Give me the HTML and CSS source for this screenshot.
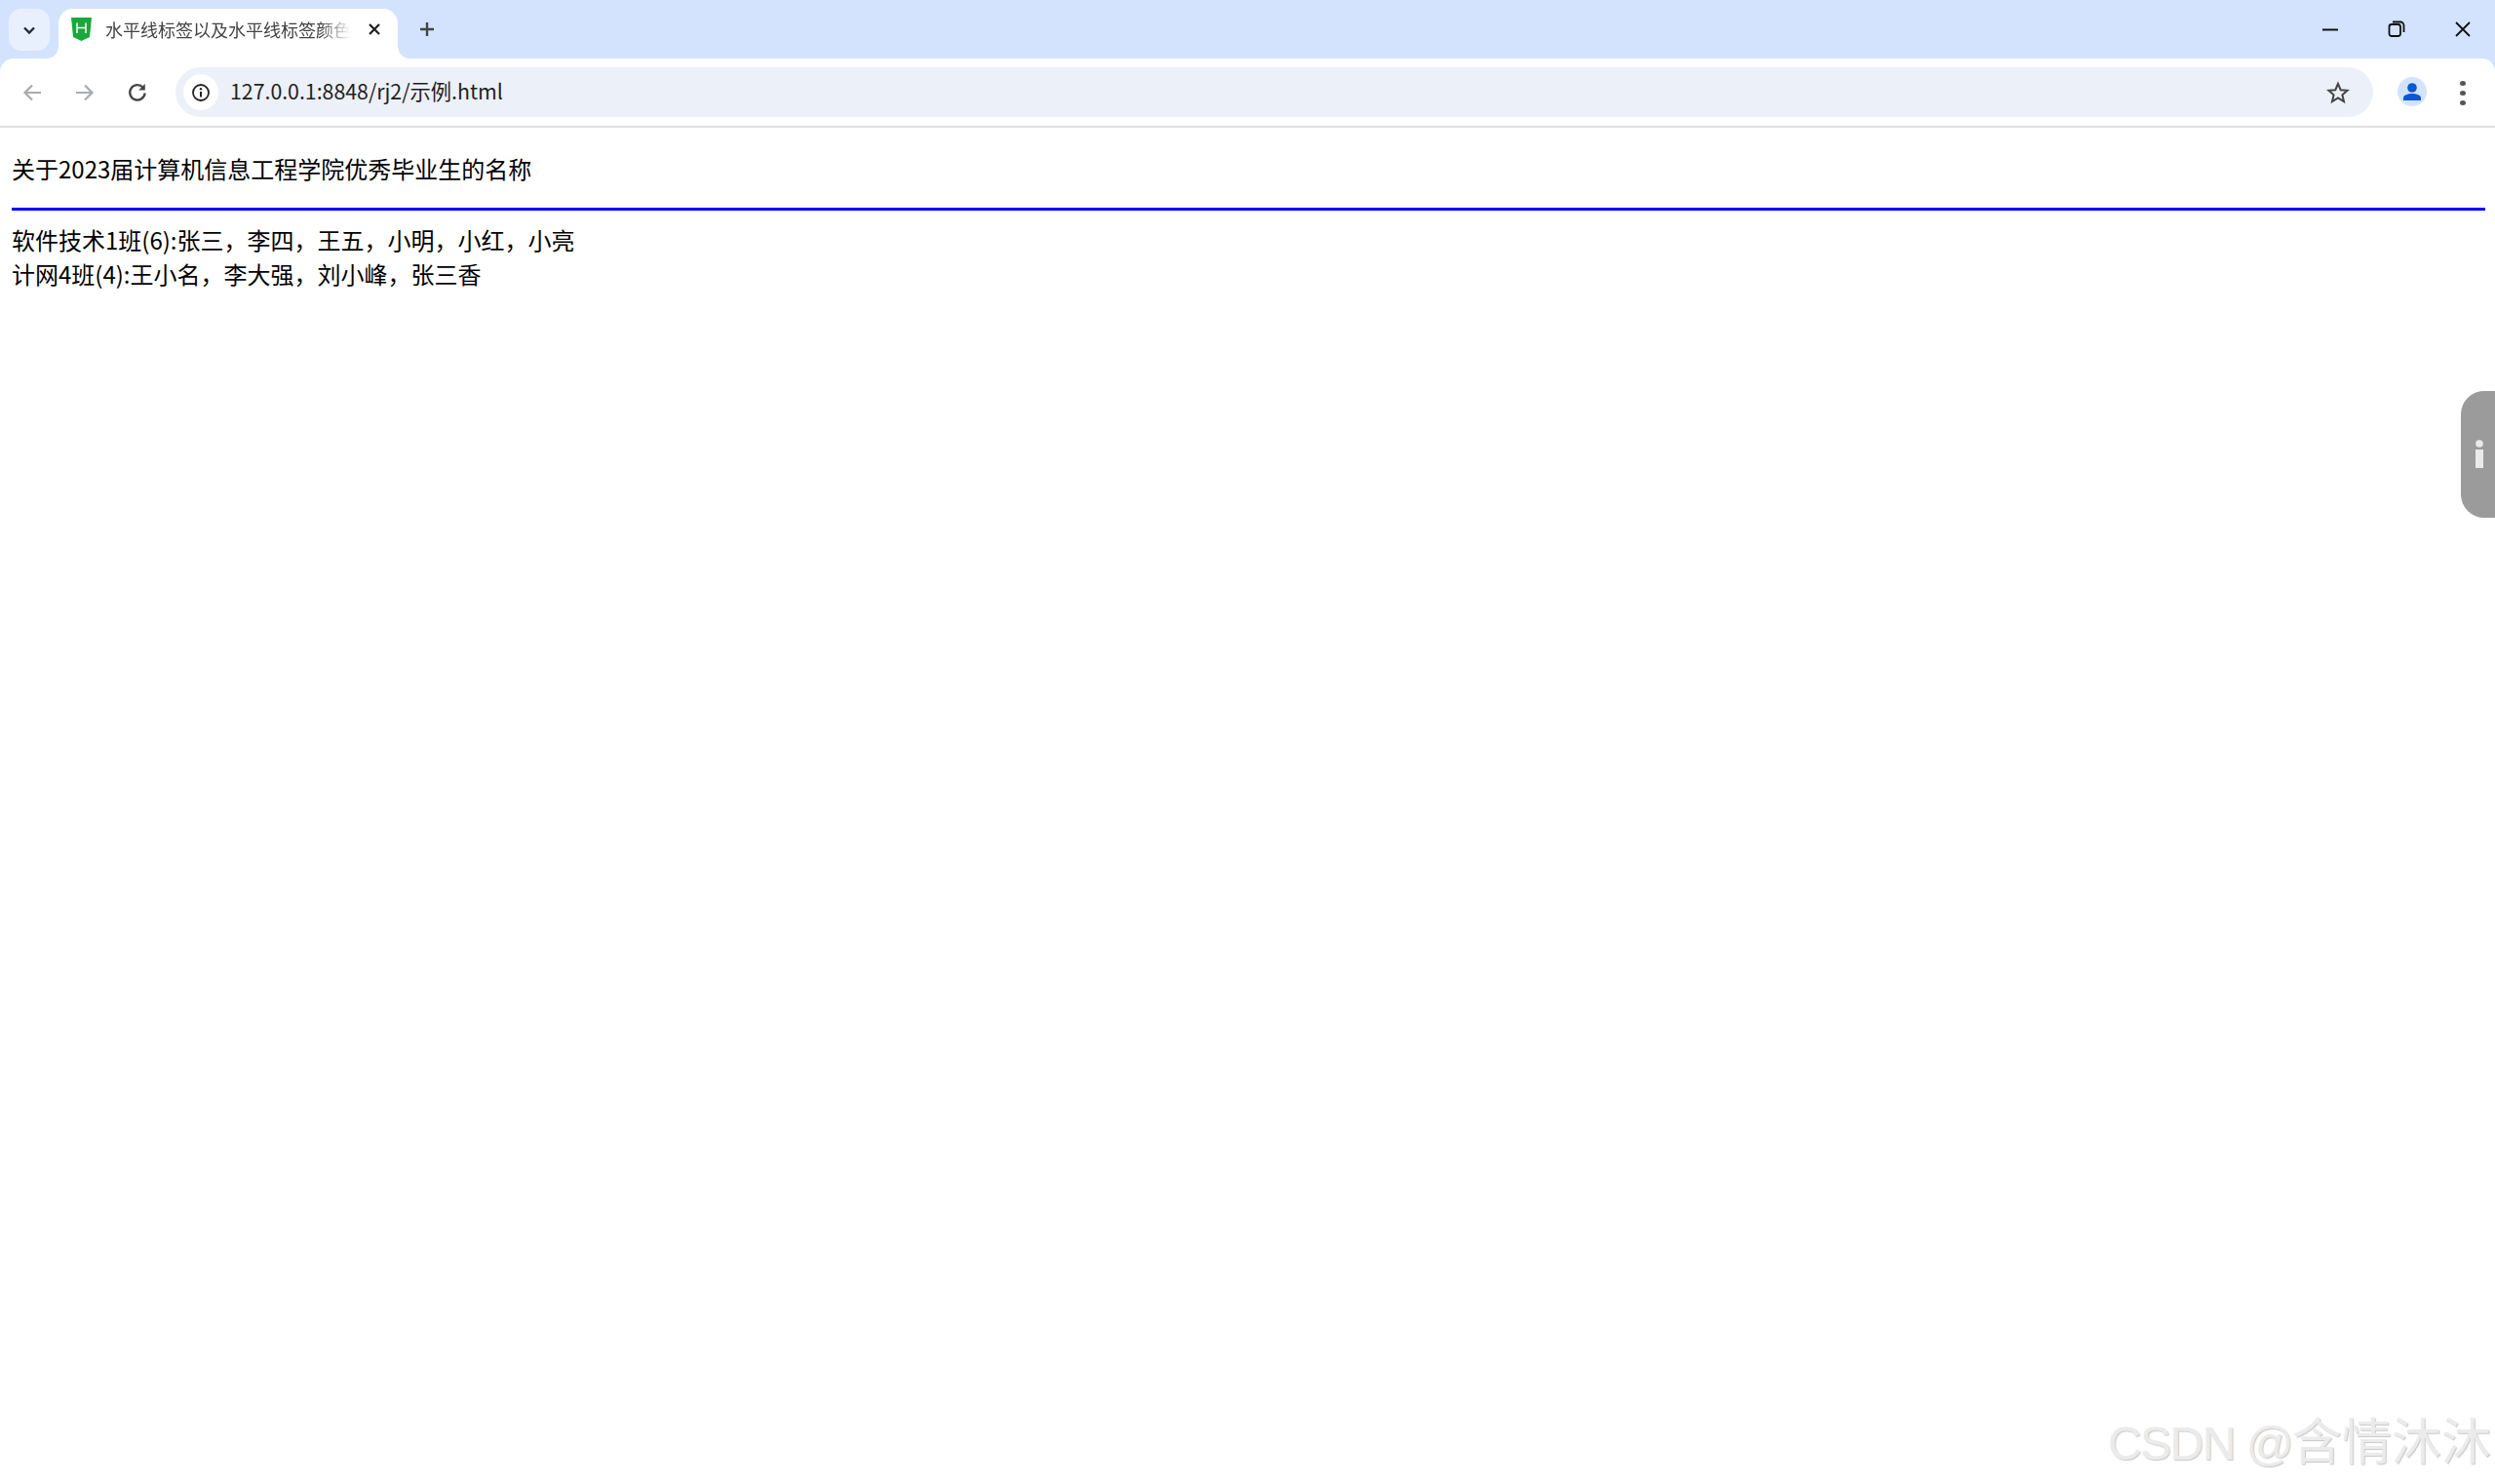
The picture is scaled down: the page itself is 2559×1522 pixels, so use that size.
FILE: index.html
```html
<!DOCTYPE html>
<html lang="zh-CN">
<head>
<meta charset="utf-8">
<title>水平线标签以及水平线标签颜色</title>
<link rel="stylesheet" href="styles.css">
</head>
<body>
<header class="chrome">
  <div class="tabstrip">
    <button class="tabsearch" aria-label="tabs">
      <svg width="16" height="16" viewBox="0 0 16 16"><path d="M3 5.5 8 10.5 13 5.5" fill="none" stroke="#1f2a3a" stroke-width="2.4"/></svg>
    </button>
    <div class="tab">
      <svg class="favicon" width="21" height="24" viewBox="0 0 21 24"><path d="M0 0H21L19 20 10.500 24 2 20Z" fill="#1aa83c"/><path d="M6 5.500V16M15 5.500V16M6 10.500H15" stroke="#fff" stroke-width="1.500" fill="none"/></svg>
      <span class="tabtitle">水平线标签以及水平线标签颜色</span>
      <svg class="tabclose" width="14" height="14" viewBox="0 0 14 14"><path d="M2 2 12 12M12 2 2 12" stroke="#1f1f1f" stroke-width="2.200"/></svg>
    </div>
    <svg class="newtab" width="20" height="20" viewBox="0 0 20 20"><path d="M10 3V17M3 10H17" stroke="#444" stroke-width="2.400"/></svg>
    <div class="winctl">
      <svg width="18" height="18" viewBox="0 0 18 18"><path d="M1 9.500H17" stroke="#111" stroke-width="2"/></svg>
      <svg width="18" height="18" viewBox="0 0 18 18"><rect x="1.500" y="4" width="11.500" height="12" rx="2.500" fill="none" stroke="#111" stroke-width="1.800"/><path d="M5 1.500H13A3.500 3.500 0 0 1 16.500 5V12" fill="none" stroke="#111" stroke-width="1.800"/></svg>
      <svg width="18" height="18" viewBox="0 0 18 18"><path d="M2 2 16 16M16 2 2 16" stroke="#111" stroke-width="1.800"/></svg>
    </div>
  </div>
  <div class="toolbar">
    <div class="navs">
      <svg width="22" height="22" viewBox="0 0 22 22"><path d="M20 11H3.500M11 3.500 3.500 11 11 18.500" fill="none" stroke="#a9abae" stroke-width="2.200"/></svg>
      <svg width="22" height="22" viewBox="0 0 22 22"><path d="M2 11H18.500M11 3.500 18.500 11 11 18.500" fill="none" stroke="#a9abae" stroke-width="2.200"/></svg>
      <svg width="22" height="22" viewBox="0 0 22 22"><path d="M18.600 11.500A7.700 7.700 0 1 1 16.600 5.700" fill="none" stroke="#444" stroke-width="2.300"/><path d="M18.800 2V8.600H12.200Z" fill="#444"/></svg>
    </div>
    <div class="omnibox">
      <span class="siteinfo">
        <svg width="20" height="20" viewBox="0 0 20 20"><circle cx="10" cy="10" r="8" fill="none" stroke="#222" stroke-width="1.800"/><path d="M10 9V14.500" stroke="#222" stroke-width="2"/><circle cx="10" cy="6.300" r="1.200" fill="#222"/></svg>
      </span>
      <span class="url">127.0.0.1:8848/rj2/示例.html</span>
      <svg class="star" width="24" height="24" viewBox="0 0 24 24"><path d="M12 2.800 14.700 9.200 21.600 9.800 16.400 14.300 18 21.100 12 17.500 6 21.100 7.600 14.300 2.400 9.800 9.300 9.200Z" fill="none" stroke="#444" stroke-width="2"/></svg>
    </div>
    <span class="avatar">
      <svg width="30" height="30" viewBox="0 0 30 30"><circle cx="15" cy="15" r="15" fill="#d3e3fd"/><circle cx="15" cy="11" r="4.800" fill="#0b57d0"/><path d="M6 24V21.500C6 18.500 10.500 17 15 17S24 18.500 24 21.500V24Z" fill="#0b57d0"/></svg>
    </span>
    <span class="menu"><i></i><i></i><i></i></span>
  </div>
</header>
<main class="page">
  <p class="heading">关于2023届计算机信息工程学院优秀毕业生的名称</p>
  <hr class="rule">
  <p class="names">软件技术1班(6):张三，李四，王五，小明，小红，小亮<br>计网4班(4):王小名，李大强，刘小峰，张三香</p>
</main>
<aside class="sidetab">
  <svg width="10" height="30" viewBox="0 0 10 30"><circle cx="5" cy="4" r="3.800" fill="#eaeaea"/><rect x="1" y="10" width="8" height="19" fill="#eaeaea"/></svg>
</aside>
<div class="watermark"><span class="wm-latin">CSDN @</span>含情沐沐</div>
</body>
</html>
```
FILE: styles.css
```css
* { box-sizing: border-box; }
html, body { margin: 0; height: 100%; }
body {
  position: relative;
  width: 2559px;
  height: 1522px;
  overflow: hidden;
  background: #fff;
  color: #000;
  font-family: "Noto Sans CJK SC", "Noto Sans", sans-serif;
}
.chrome { background: #d3e3fd; }
.tabstrip {
  height: 60px;
  display: flex;
  align-items: flex-start;
  padding: 9px 0 0 9px;
}
.tabsearch {
  width: 42px;
  height: 43px;
  flex: none;
  border: 0;
  padding: 0;
  border-radius: 13px;
  background: #e9f0fd;
  display: flex;
  align-items: center;
  justify-content: center;
}
.tab {
  position: relative;
  flex: none;
  width: 348px;
  height: 51px;
  margin-left: 9px;
  padding: 0 15px 9px 13px;
  background: #fff;
  border-radius: 15px 15px 0 0;
  display: flex;
  align-items: center;
}
.tab::before, .tab::after {
  content: "";
  position: absolute;
  bottom: 0;
  width: 12px;
  height: 12px;
}
.tab::before { left: -12px; background: radial-gradient(circle at 0 0, #d3e3fd 11.500px, #fff 12px); }
.tab::after { right: -12px; background: radial-gradient(circle at 100% 0, #d3e3fd 11.500px, #fff 12px); }
.favicon { flex: none; }
.tabtitle {
  flex: none;
  width: 251px;
  margin-left: 14px;
  overflow: hidden;
  white-space: nowrap;
  font-size: 18px;
  line-height: 24px;
  color: #444;
  -webkit-mask-image: linear-gradient(90deg, #000 88%, transparent);
  mask-image: linear-gradient(90deg, #000 88%, transparent);
}
.tabclose { flex: none; margin-left: 18px; }
.newtab { flex: none; margin: 11px 0 0 20px; }
.winctl {
  margin: 12px 24px 0 auto;
  display: flex;
  gap: 50px;
}
.toolbar {
  height: 71px;
  padding: 9px 0 10px 0;
  background: #fff;
  border-radius: 14px 14px 0 0;
  border-bottom: 2px solid #e1e1e1;
  display: flex;
  align-items: flex-start;
}
.navs {
  flex: none;
  width: 180px;
  height: 51px;
  padding-left: 22px;
  display: flex;
  align-items: center;
  gap: 32px;
}
.navs svg { flex: none; }
.omnibox {
  flex: none;
  width: 2254px;
  height: 51px;
  padding: 0 10px 0 8px;
  border-radius: 26px;
  background: #ecf0f9;
  display: flex;
  align-items: center;
}
.siteinfo {
  width: 36px;
  height: 37px;
  border-radius: 50%;
  background: #fff;
  display: flex;
  align-items: center;
  justify-content: center;
  flex: none;
}
.url {
  margin-left: 12px;
  padding-bottom: 3px;
  font-size: 21.300px;
  line-height: 28px;
  color: #1f1f1f;
  white-space: nowrap;
}
.star { margin-left: auto; margin-right: 14px; flex: none; }
.avatar { flex: none; margin: 10px 0 0 25px; height: 30px; display: block; }
.avatar svg { display: block; }
.menu {
  flex: none;
  margin: 14px 0 0 34px;
  width: 6px;
  display: flex;
  flex-direction: column;
  gap: 5px;
}
.menu i { width: 6px; height: 5px; border-radius: 50%; background: #555; }
.page { padding: 0 8px 0 12px; }
.heading {
  margin: 0;
  padding-top: 24px;
  font-size: 24px;
  line-height: 35px;
}
.rule {
  margin: 23px 2px 0 0;
  height: 3px;
  border: 0;
  background: #0000ff;
}
.names {
  margin: 0;
  padding-top: 12px;
  font-size: 24px;
  line-height: 35px;
}
.sidetab {
  position: absolute;
  top: 401px;
  right: 0;
  width: 35px;
  height: 130px;
  background: #9b9b9b;
  border-radius: 24px 0 0 24px;
  display: flex;
  align-items: center;
  justify-content: flex-end;
  padding-right: 11px;
}
.watermark {
  position: absolute;
  right: 4px;
  top: 1445px;
  font-family: "Liberation Sans", "Noto Sans CJK JP", sans-serif;
  font-size: 51px;
  line-height: 70px;
  white-space: nowrap;
  color: #ebebeb;
  text-shadow: 1px 1px 1px #c8c8c8;
}
.wm-latin { font-size: 48px; letter-spacing: -1.500px; }
```
